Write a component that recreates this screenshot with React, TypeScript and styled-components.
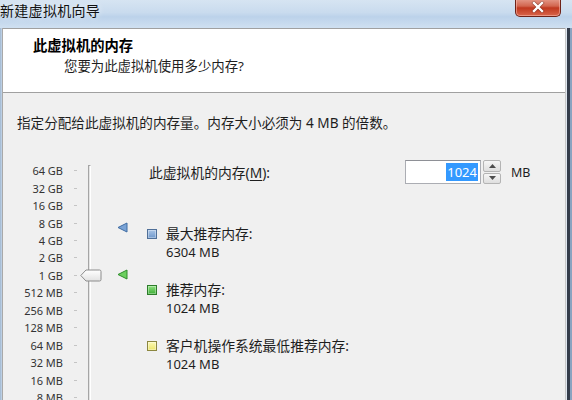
import React from 'react';
import styled, { createGlobalStyle } from 'styled-components';

const FONT = `"Noto Sans", "Noto Sans CJK SC", sans-serif`;

const Global = createGlobalStyle`
  html, body { margin: 0; padding: 0; width: 572px; height: 400px; overflow: hidden; background: #f0f0f0; }
  * { box-sizing: border-box; }
`;

const Window = styled.div`
  width: 572px;
  height: 400px;
  display: flex;
  flex-direction: column;
  overflow: hidden;
  font-family: ${FONT};
  color: #1e1e1e;
`;

const TitleBar = styled.div`
  height: 28px;
  flex: none;
  display: flex;
  align-items: flex-start;
  background: linear-gradient(180deg, #d6e4f2 0%, #c9dbee 45%, #bcd2ea 60%, #cfe0f1 100%);
`;

const TitleText = styled.div`
  font-size: 14px;
  line-height: 20px;
  padding-top: 1px;
  color: #111;
  text-shadow: 0 0 6px rgba(255, 255, 255, 0.9);
  letter-spacing: 0.3px;
`;

const CloseButton = styled.div`
  margin-left: auto;
  margin-right: 11px;
  margin-top: -2px;
  width: 46px;
  height: 19px;
  border: 1px solid #6e2218;
  border-top: none;
  border-radius: 0 0 5px 5px;
  background: linear-gradient(180deg, #e8a293 0%, #d2664f 45%, #c0381f 55%, #d9654a 100%);
  box-shadow: inset 0 0 0 1px rgba(255, 200, 190, 0.5);
  display: flex;
  align-items: center;
  justify-content: center;
`;

const Frame = styled.div`
  flex: 1;
  display: flex;
  min-height: 0;
`;

const LeftEdge = styled.div`
  width: 2px;
  flex: none;
  background: linear-gradient(90deg, #9fb6cf, #c4d6ea);
`;

const RightEdge = styled.div`
  width: 6px;
  flex: none;
  display: flex;
`;

const EdgeStrip = styled.div<{ $w: number; $c: string }>`
  width: ${p => p.$w}px;
  background: ${p => p.$c};
`;

const Content = styled.div`
  flex: 1;
  display: flex;
  flex-direction: column;
  border-left: 1px solid #a9a9a9;
  border-right: 1px solid #c8c8c8;
  background: #f0f0f0;
`;

const Header = styled.div`
  height: 65px;
  flex: none;
  background: #fff;
  border-top: 1px solid #a0a0a0;
  border-bottom: 1px solid #a0a0a0;
  padding: 8px 0 0 30px;
`;

const HeaderTitle = styled.div`
  font-size: 14.3px;
  font-weight: 700;
  line-height: 18px;
  color: #000;
`;

const HeaderSub = styled.div`
  font-size: 13.4px;
  line-height: 18px;
  margin-top: 2px;
  padding-left: 31px;
  color: #1e1e1e;
`;

const Body = styled.div`
  flex: 1;
  padding-top: 21px;
`;

const Instruction = styled.div`
  font-size: 13.6px;
  line-height: 18px;
  padding-left: 14px;
`;

const Main = styled.div`
  margin-top: 28px;
  display: flex;
`;

const Slider = styled.div`
  position: relative;
  width: 144px;
  flex: none;
  padding: 2px 0 0 17px;
`;

const ScaleRow = styled.div`
  height: 17.46px;
  display: flex;
  align-items: center;
`;

const ScaleLabel = styled.div`
  width: 43px;
  text-align: right;
  font-size: 11px;
  color: #333;
  white-space: nowrap;
`;

const Tick = styled.div`
  width: 3px;
  height: 1px;
  margin-left: 11px;
  background: #c4c4c4;
`;

const Track = styled.div`
  position: absolute;
  left: 85px;
  top: 5px;
  bottom: -20px;
  width: 3px;
  border-left: 1px solid #a5a5a5;
  border-right: 1px solid #fff;
  border-top: 1px solid #a5a5a5;
  background: #e4e4e4;
`;

const Thumb = styled.svg`
  position: absolute;
  left: 77px;
  width: 22px;
  height: 13px;
`;

const Marker = styled.svg`
  position: absolute;
  left: 114px;
  width: 11px;
  height: 11px;
`;

const Right = styled.div`
  flex: 1;
  display: flex;
  flex-direction: column;
`;

const MemoryRow = styled.div`
  height: 24px;
  display: flex;
  align-items: center;
  font-size: 13.8px;
`;

const MemoryLabel = styled.div`
  width: 258px;
  padding-left: 2px;
  u { text-decoration: underline; text-underline-offset: 2px; }
`;

const SpinInput = styled.div`
  width: 76px;
  height: 24px;
  border: 1px solid #abadb3;
  border-top-color: #8e9096;
  background: #fff;
  display: flex;
  align-items: center;
  justify-content: flex-end;
  padding-right: 2px;
`;

const Selected = styled.span`
  background: #3399ff;
  color: #fff;
  font-size: 13px;
  line-height: 18px;
  padding: 0 1px;
`;

const SpinButtons = styled.div`
  margin-left: 2px;
  width: 18px;
  height: 24px;
  display: flex;
  flex-direction: column;
  gap: 1px;
`;

const SpinBtn = styled.div`
  flex: 1;
  border: 1px solid #b4b4b4;
  border-radius: 2px;
  background: linear-gradient(180deg, #f6f6f6, #dedede);
  display: flex;
  align-items: center;
  justify-content: center;
`;

const Unit = styled.div`
  margin-left: 10px;
  font-size: 12.5px;
`;

const Legend = styled.div`
  margin-top: 41px;
  display: flex;
  flex-direction: column;
  gap: 20px;
`;

const LegendItem = styled.div`
  display: grid;
  grid-template-columns: 10px auto;
  column-gap: 9px;
  align-items: center;
  font-size: 13.8px;
  line-height: 18px;
`;

const Swatch = styled.div<{ $fill: string; $border: string }>`
  width: 10px;
  height: 10px;
  border: 1px solid ${p => p.$border};
  background: ${p => p.$fill};
  box-shadow: inset 0 0 0 1px rgba(255, 255, 255, 0.35);
`;

const LegendValue = styled.div`
  grid-column: 2;
  font-size: 13px;
`;

const scale = ['64 GB', '32 GB', '16 GB', '8 GB', '4 GB', '2 GB', '1 GB', '512 MB', '256 MB', '128 MB', '64 MB', '32 MB', '16 MB', '8 MB', '4 MB'];
const ROW = 17.46;
const rowCenter = (i: number) => 2 + ROW * i + ROW / 2;
const posFor = (mb: number) => rowCenter(Math.log2(65536 / mb));

const legend = [
  { label: '最大推荐内存:', value: '6304 MB', fill: 'linear-gradient(180deg,#a9c4e6,#6f98cc)', border: '#4f6f98' },
  { label: '推荐内存:', value: '1024 MB', fill: 'linear-gradient(180deg,#8ee07f,#3cae35)', border: '#2d7d2a' },
  { label: '客户机操作系统最低推荐内存:', value: '1024 MB', fill: 'linear-gradient(180deg,#fbf9b5,#ece56a)', border: '#8c8740' },
];

export default function App() {
  const memory = 1024;
  return (
    <>
      <Global />
      <Window>
        <TitleBar>
          <TitleText>新建虚拟机向导</TitleText>
          <CloseButton>
            <svg width="14" height="12" viewBox="0 0 14 12">
              <path d="M3 2 L11 10 M11 2 L3 10" stroke="#5a1a10" strokeWidth="3.6" strokeLinecap="square" opacity="0.5" />
              <path d="M3 2 L11 10 M11 2 L3 10" stroke="#fff" strokeWidth="2.4" strokeLinecap="square" />
            </svg>
          </CloseButton>
        </TitleBar>
        <Frame>
          <LeftEdge />
          <Content>
            <Header>
              <HeaderTitle>此虚拟机的内存</HeaderTitle>
              <HeaderSub>您要为此虚拟机使用多少内存?</HeaderSub>
            </Header>
            <Body>
              <Instruction>指定分配给此虚拟机的内存量。内存大小必须为 4 MB 的倍数。</Instruction>
              <Main>
                <Slider>
                  {scale.map(s => (
                    <ScaleRow key={s}>
                      <ScaleLabel>{s}</ScaleLabel>
                      <Tick />
                    </ScaleRow>
                  ))}
                  <Track />
                  <Thumb viewBox="0 0 22 13" style={{ top: posFor(memory) - 6.5 }}>
                    <defs>
                      <linearGradient id="thumbg" x1="0" y1="0" x2="0" y2="1">
                        <stop offset="0" stopColor="#ffffff" />
                        <stop offset="1" stopColor="#e2e2e2" />
                      </linearGradient>
                    </defs>
                    <path d="M0.8 6.5 L6 1 H19.5 Q21 1 21 2.5 V10.5 Q21 12 19.5 12 H6 Z" fill="url(#thumbg)" stroke="#8c8c8c" strokeWidth="1" />
                  </Thumb>
                  <Marker viewBox="0 0 11 11" style={{ top: posFor(6304) - 7.5 }}>
                    <polygon points="10,1 10,10 1,5.5" fill="#7aa3d6" stroke="#3f6ca3" strokeWidth="1" strokeLinejoin="round" />
                  </Marker>
                  <Marker viewBox="0 0 11 11" style={{ top: posFor(1024) - 6.5 }}>
                    <polygon points="10,1 10,10 1,5.5" fill="#6ccf5f" stroke="#2f8d2b" strokeWidth="1" strokeLinejoin="round" />
                  </Marker>
                </Slider>
                <Right>
                  <MemoryRow>
                    <MemoryLabel>此虚拟机的内存(<u>M</u>):</MemoryLabel>
                    <SpinInput>
                      <Selected>{memory}</Selected>
                    </SpinInput>
                    <SpinButtons>
                      <SpinBtn>
                        <svg width="7" height="4" viewBox="0 0 7 4"><polygon points="0,4 7,4 3.5,0" fill="#4d4d4d" /></svg>
                      </SpinBtn>
                      <SpinBtn>
                        <svg width="7" height="4" viewBox="0 0 7 4"><polygon points="0,0 7,0 3.5,4" fill="#4d4d4d" /></svg>
                      </SpinBtn>
                    </SpinButtons>
                    <Unit>MB</Unit>
                  </MemoryRow>
                  <Legend>
                    {legend.map(l => (
                      <LegendItem key={l.label}>
                        <Swatch $fill={l.fill} $border={l.border} />
                        <div>{l.label}</div>
                        <LegendValue>{l.value}</LegendValue>
                      </LegendItem>
                    ))}
                  </Legend>
                </Right>
              </Main>
            </Body>
          </Content>
          <RightEdge>
            <EdgeStrip $w={1} $c="#dfe7f0" />
            <EdgeStrip $w={3} $c="#343c4a" />
            <EdgeStrip $w={2} $c="#8aa3c0" />
          </RightEdge>
        </Frame>
      </Window>
    </>
  );
}
